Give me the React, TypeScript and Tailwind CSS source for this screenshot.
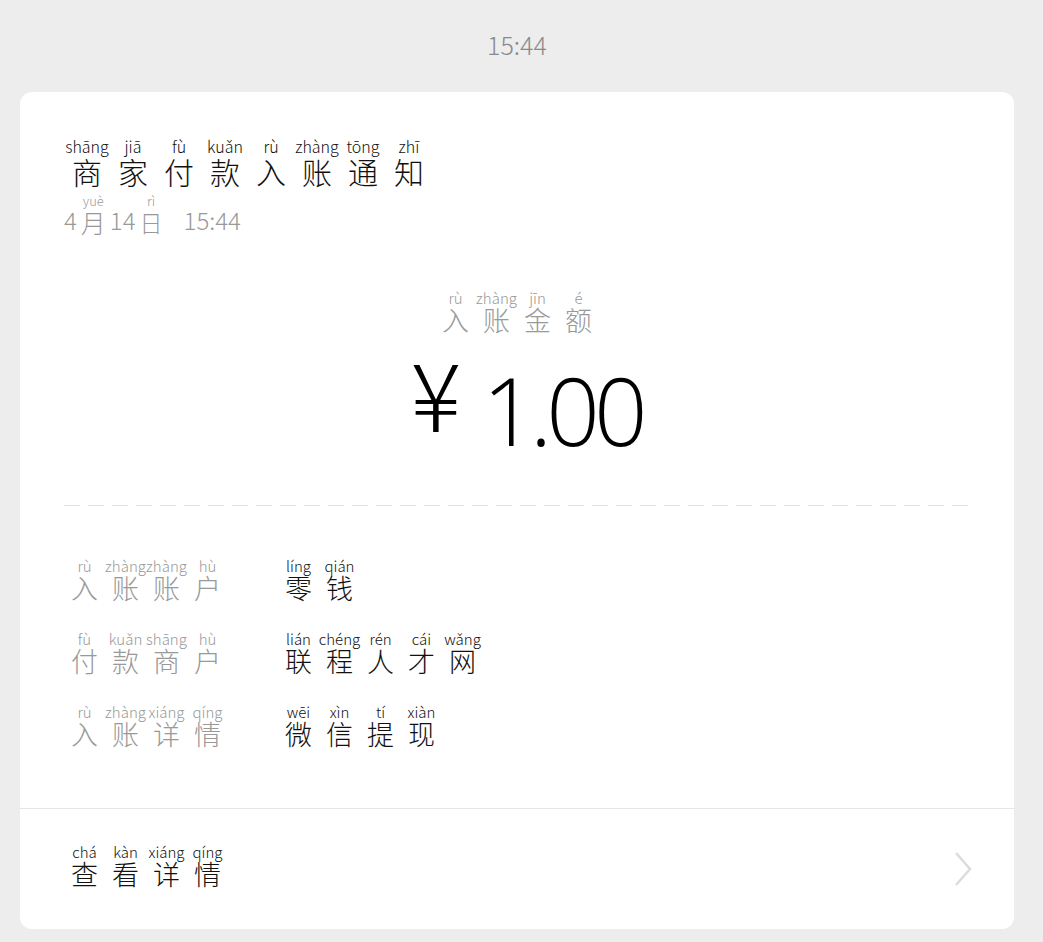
import React from "react";

type Pair = [string, string];

const font = { fontFamily: '"Noto Sans CJK SC", "Noto Sans", sans-serif' };
const numFont = { fontFamily: '"Open Sans", "Noto Sans", sans-serif' };

const title: Pair[] = [
  ["商", "shāng"],
  ["家", "jiā"],
  ["付", "fù"],
  ["款", "kuǎn"],
  ["入", "rù"],
  ["账", "zhàng"],
  ["通", "tōng"],
  ["知", "zhī"],
];

const amountLabel: Pair[] = [
  ["入", "rù"],
  ["账", "zhàng"],
  ["金", "jīn"],
  ["额", "é"],
];

const rows: { label: Pair[]; value: Pair[] }[] = [
  {
    label: [["入", "rù"], ["账", "zhàng"], ["账", "zhàng"], ["户", "hù"]],
    value: [["零", "líng"], ["钱", "qián"]],
  },
  {
    label: [["付", "fù"], ["款", "kuǎn"], ["商", "shāng"], ["户", "hù"]],
    value: [["联", "lián"], ["程", "chéng"], ["人", "rén"], ["才", "cái"], ["网", "wǎng"]],
  },
  {
    label: [["入", "rù"], ["账", "zhàng"], ["详", "xiáng"], ["情", "qíng"]],
    value: [["微", "wēi"], ["信", "xìn"], ["提", "tí"], ["现", "xiàn"]],
  },
];

const detail: Pair[] = [
  ["查", "chá"],
  ["看", "kàn"],
  ["详", "xiáng"],
  ["情", "qíng"],
];

// small cell: pinyin over hanzi, 41px wide
function Cells({ items, className }: { items: Pair[]; className: string }) {
  return (
    <div className={"flex " + className}>
      {items.map(([hz, py], i) => (
        <div key={i} className="flex w-[41px] flex-col items-center">
          <span className="whitespace-nowrap text-[15px] leading-[17px]">{py}</span>
          <span className="text-[27px] leading-[28px]">{hz}</span>
        </div>
      ))}
    </div>
  );
}

export default function App() {
  return (
    <div className="min-h-[942px] w-[1043px] bg-[#ededed] pb-[14px] pl-5 pr-[29px] font-light" style={font}>
      <div className="flex h-[92px] items-start justify-center pt-[27px]">
        <span className="text-[25px] leading-[34px] text-[#8a8a8a]">15:44</span>
      </div>

      <div className="rounded-xl bg-white">
        <div className="px-11 pt-[45px]">
          <div className="flex text-[#111]">
            {title.map(([hz, py], i) => (
              <div key={i} className="flex w-[46px] flex-col items-center">
                <span className="whitespace-nowrap text-[16px] leading-[19px]">{py}</span>
                <span className="text-[30px] leading-[30px]">{hz}</span>
              </div>
            ))}
          </div>

          <div className="mt-[8px] flex items-end text-[#999]">
            <span className="text-[24px] leading-[34px]">4</span>
            <span className="ml-[4px] flex flex-col items-center">
              <span className="text-[13px] leading-[13px]">yuè</span>
              <span className="text-[25px] leading-[30px]">月</span>
            </span>
            <span className="ml-[4px] text-[24px] leading-[34px]">14</span>
            <span className="ml-[4px] flex flex-col items-center">
              <span className="text-[13px] leading-[13px]">rì</span>
              <span className="text-[23px] leading-[30px]">日</span>
            </span>
            <span className="ml-[21px] text-[24px] leading-[34px]">15:44</span>
          </div>

          <div className="mt-[52px] flex justify-center text-[#999]">
            <Cells items={amountLabel} className="" />
          </div>

          <div className="mt-[26px] flex items-start justify-center pl-[18px] text-black">
            <span className="mt-[-19px] text-[95px] leading-[100px]">¥</span>
            <span className="ml-[21px] text-[94px] leading-[100px] tracking-[-6px]" style={numFont}>
              1.00
            </span>
          </div>

          <div className="mt-[45px] h-px w-full bg-[linear-gradient(to_right,#e0e0e0_16px,transparent_16px)] bg-[length:24px_1px]" />

          <div className="mt-[51px] flex flex-col gap-[28px] pb-[60px]">
            {rows.map((r, i) => (
              <div key={i} className="flex">
                <Cells items={r.label} className="w-[214px] text-[#999]" />
                <Cells items={r.value} className="text-[#111]" />
              </div>
            ))}
          </div>
        </div>

        <div className="flex items-center justify-between border-t border-[#e5e5e5] px-11 pb-[41px] pt-[34px]">
          <Cells items={detail} className="text-[#111]" />
          <svg width="20" height="36" viewBox="0 0 20 36" className="mr-[-3px] mt-[6px]">
            <polyline points="3,2 17,18 3,34" fill="none" stroke="#dcdcdc" strokeWidth="2.5" />
          </svg>
        </div>
      </div>
    </div>
  );
}
